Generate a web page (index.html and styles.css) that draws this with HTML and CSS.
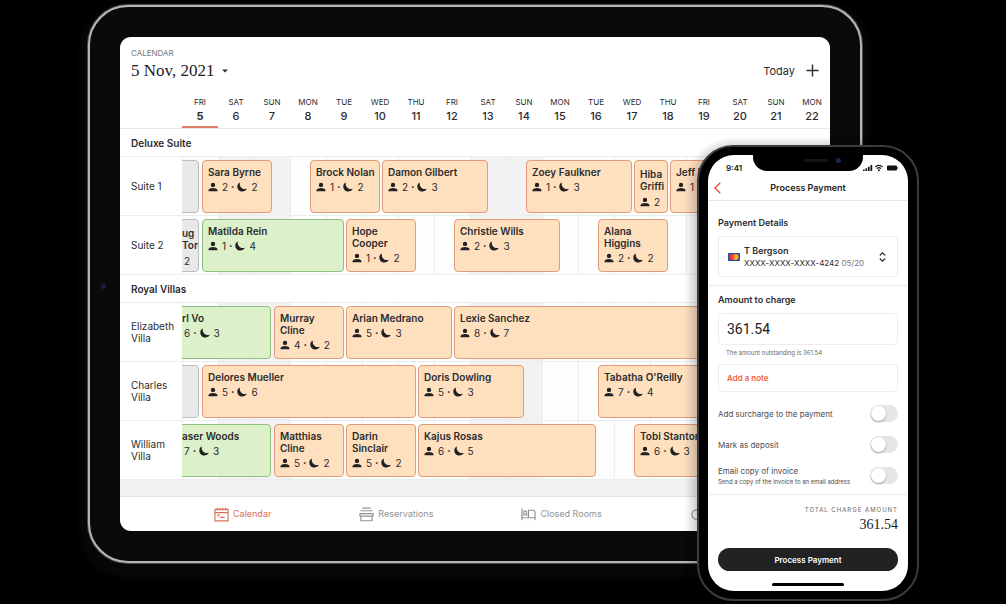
FILE: index.html
```html
<!DOCTYPE html>
<html lang="en">
<head>
<meta charset="utf-8">
<title>Calendar and payment</title>
<link rel="stylesheet" href="styles.css">
</head>
<body>
<svg class="defs" aria-hidden="true">
  <symbol id="person" viewBox="0 0 10 10"><circle cx="5" cy="2.900" r="2.200"/><path d="M.6 9.300V8.300c0-1.600 2.400-2.300 4.400-2.300s4.400.7 4.400 2.300v1z"/></symbol>
  <symbol id="moon" viewBox="0 0 10 10"><path d="M2.900.4C.9 1.300.2 3 .3 4.800c.1 2.700 2.300 4.800 4.900 4.800 2.100 0 3.800-1 4.600-2.800C6 8.100 1.900 5 2.900.4z"/></symbol>
</svg>
<div class="stage">
  <main class="tablet">
    <span class="camera"></span>
    <div class="screen">
      <header class="top">
        <div class="heading">
          <p class="eyebrow">CALENDAR</p>
          <div class="title-row">
            <h1 class="title">5 Nov, 2021</h1>
            <button class="icon-button" aria-label="Choose date"><svg class="caret" viewBox="0 0 6 4"><path d="M0 .5h6L3 3.500z"/></svg></button>
            <button class="today">Today</button>
            <button class="icon-button" aria-label="Add booking"><svg class="plus" viewBox="0 0 13 13"><path d="M6.500.5v12M.5 6.500h12"/></svg></button>
          </div>
        </div>
        <ol class="days">
          <li class="day current">FRI<b>5</b></li><li class="day">SAT<b>6</b></li><li class="day">SUN<b>7</b></li><li class="day">MON<b>8</b></li><li class="day">TUE<b>9</b></li><li class="day">WED<b>10</b></li><li class="day">THU<b>11</b></li><li class="day">FRI<b>12</b></li><li class="day">SAT<b>13</b></li><li class="day">SUN<b>14</b></li><li class="day">MON<b>15</b></li><li class="day">TUE<b>16</b></li><li class="day">WED<b>17</b></li><li class="day">THU<b>18</b></li><li class="day">FRI<b>19</b></li><li class="day">SAT<b>20</b></li><li class="day">SUN<b>21</b></li><li class="day">MON<b>22</b></li>
        </ol>
      </header>

      <h2 class="group">Deluxe Suite</h2>
      <section class="room">
        <h3 class="room-name">Suite 1</h3>
        <div class="lane">
          <article class="booking past earlier" style="grid-column: 1 / 2"></article>
          <article class="booking" style="grid-column: 2 / 6"><h4>Sara Byrne</h4><p class="meta"><svg><use href="#person"/></svg>2<i>•</i><svg><use href="#moon"/></svg>2</p></article>
          <article class="booking" style="grid-column: 8 / 12"><h4>Brock Nolan</h4><p class="meta"><svg><use href="#person"/></svg>1<i>•</i><svg><use href="#moon"/></svg>2</p></article>
          <article class="booking" style="grid-column: 12 / 18"><h4>Damon Gilbert</h4><p class="meta"><svg><use href="#person"/></svg>2<i>•</i><svg><use href="#moon"/></svg>3</p></article>
          <article class="booking" style="grid-column: 20 / 26"><h4>Zoey Faulkner</h4><p class="meta"><svg><use href="#person"/></svg>1<i>•</i><svg><use href="#moon"/></svg>3</p></article>
          <article class="booking narrow" style="grid-column: 26 / 28"><h4>Hiba Griffi</h4><p class="meta"><svg><use href="#person"/></svg>2</p></article>
          <article class="booking" style="grid-column: 28 / 32"><h4>Jeff Ross</h4><p class="meta"><svg><use href="#person"/></svg>1<i>•</i><svg><use href="#moon"/></svg>2</p></article>
        </div>
      </section>
      <section class="room">
        <h3 class="room-name">Suite 2</h3>
        <div class="lane">
          <article class="booking past earlier narrow" style="grid-column: 1 / 2"><h4>ug Tor</h4><p class="meta">2</p></article>
          <article class="booking arrived" style="grid-column: 2 / 10"><h4>Matilda Rein</h4><p class="meta"><svg><use href="#person"/></svg>1<i>•</i><svg><use href="#moon"/></svg>4</p></article>
          <article class="booking" style="grid-column: 10 / 14"><h4>Hope Cooper</h4><p class="meta"><svg><use href="#person"/></svg>1<i>•</i><svg><use href="#moon"/></svg>2</p></article>
          <article class="booking" style="grid-column: 16 / 22"><h4>Christie Wills</h4><p class="meta"><svg><use href="#person"/></svg>2<i>•</i><svg><use href="#moon"/></svg>3</p></article>
          <article class="booking" style="grid-column: 24 / 28"><h4>Alana Higgins</h4><p class="meta"><svg><use href="#person"/></svg>2<i>•</i><svg><use href="#moon"/></svg>2</p></article>
        </div>
      </section>

      <h2 class="group">Royal Villas</h2>
      <section class="room">
        <h3 class="room-name">Elizabeth Villa</h3>
        <div class="lane">
          <article class="booking arrived earlier" style="grid-column: 1 / 6"><h4>rl Vo</h4><p class="meta">6<i>•</i><svg><use href="#moon"/></svg>3</p></article>
          <article class="booking" style="grid-column: 6 / 10"><h4>Murray Cline</h4><p class="meta"><svg><use href="#person"/></svg>4<i>•</i><svg><use href="#moon"/></svg>2</p></article>
          <article class="booking" style="grid-column: 10 / 16"><h4>Arian Medrano</h4><p class="meta"><svg><use href="#person"/></svg>5<i>•</i><svg><use href="#moon"/></svg>3</p></article>
          <article class="booking" style="grid-column: 16 / 32"><h4>Lexie Sanchez</h4><p class="meta"><svg><use href="#person"/></svg>8<i>•</i><svg><use href="#moon"/></svg>7</p></article>
        </div>
      </section>
      <section class="room">
        <h3 class="room-name">Charles Villa</h3>
        <div class="lane">
          <article class="booking past earlier" style="grid-column: 1 / 2"></article>
          <article class="booking" style="grid-column: 2 / 14"><h4>Delores Mueller</h4><p class="meta"><svg><use href="#person"/></svg>5<i>•</i><svg><use href="#moon"/></svg>6</p></article>
          <article class="booking" style="grid-column: 14 / 20"><h4>Doris Dowling</h4><p class="meta"><svg><use href="#person"/></svg>5<i>•</i><svg><use href="#moon"/></svg>3</p></article>
          <article class="booking" style="grid-column: 24 / 32"><h4>Tabatha O'Reilly</h4><p class="meta"><svg><use href="#person"/></svg>7<i>•</i><svg><use href="#moon"/></svg>4</p></article>
        </div>
      </section>
      <section class="room">
        <h3 class="room-name">William Villa</h3>
        <div class="lane">
          <article class="booking arrived earlier" style="grid-column: 1 / 6"><h4>aser Woods</h4><p class="meta">7<i>•</i><svg><use href="#moon"/></svg>3</p></article>
          <article class="booking" style="grid-column: 6 / 10"><h4>Matthias Cline</h4><p class="meta"><svg><use href="#person"/></svg>5<i>•</i><svg><use href="#moon"/></svg>2</p></article>
          <article class="booking" style="grid-column: 10 / 14"><h4>Darin Sinclair</h4><p class="meta"><svg><use href="#person"/></svg>5<i>•</i><svg><use href="#moon"/></svg>2</p></article>
          <article class="booking" style="grid-column: 14 / 24"><h4>Kajus Rosas</h4><p class="meta"><svg><use href="#person"/></svg>6<i>•</i><svg><use href="#moon"/></svg>5</p></article>
          <article class="booking" style="grid-column: 26 / 32"><h4>Tobi Stanton</h4><p class="meta"><svg><use href="#person"/></svg>6<i>•</i><svg><use href="#moon"/></svg>3</p></article>
        </div>
      </section>
      <div class="filler"></div>

      <nav class="tabs">
        <a class="tab active" href="#calendar"><svg class="tab-icon" viewBox="0 0 16 16"><path d="M1 2.500h14v12.300H1zM1 6h14M3.500.8v3M6.500.8v3M9.500.8v3M12.500.8v3M3.500 8.500h3M6.500 11h5M4.500 10v-1.500"/></svg>Calendar</a>
        <a class="tab" href="#reservations"><svg class="tab-icon" viewBox="0 0 16 16"><path d="M3.500 1.200h9M1.500 4h13M1 10V7h14v3M2 9.500v5.200h12V9.500M1 9.700h14"/></svg>Reservations</a>
        <a class="tab" href="#closed"><svg class="tab-icon" viewBox="0 0 16 16"><path d="M1 1.500V14M1 11.500h14M15 14V5.500a2 2 0 0 0-2-2H8v8M1 8.500h7"/><circle cx="4.500" cy="5.800" r="1.700"/></svg>Closed Rooms</a>
        <a class="tab" href="#settings" aria-label="Settings"><svg class="tab-icon" viewBox="0 0 16 16"><circle cx="7" cy="8" r="5"/></svg></a>
      </nav>
    </div>
  </main>

  <aside class="phone">
    <form class="pay">
      <div class="status">
        <span class="clock">9:41</span>
        <div class="notch"><span class="speaker"></span><span class="lens"></span></div>
        <svg class="signals" viewBox="0 0 36 8"><path d="M0 5.500h1.700V7H0zM2.500 4.300h1.700V7H2.500zM5 2.800h1.700V7H5zM7.500 1h1.700v6H7.500z"/><path class="wave" d="M12.300 3c2.200-2 5-2 7.200 0M13.800 4.700c1.200-1.200 3-1.200 4.200 0"/><circle cx="15.900" cy="6.200" r="1"/><rect x="24" y="1.500" width="10" height="5" rx="1"/><path d="M34.500 3h.7v2h-.7z"/></svg>
      </div>
      <header class="pay-head">
        <button type="button" class="back" aria-label="Back"><svg viewBox="0 0 7 12"><path d="M6.200.8.9 6l5.300 5.200"/></svg></button>
        <h2>Process Payment</h2>
      </header>
      <section class="part">
        <h3>Payment Details</h3>
        <button type="button" class="card">
          <svg class="brand" viewBox="0 0 12 8"><rect width="12" height="8" rx="1" fill="#3046a8"/><circle cx="4.300" cy="4" r="2.900" fill="#ee3b26"/><circle cx="7.700" cy="4" r="2.900" fill="#f8b21c"/><path d="M6 1.600a2.900 2.900 0 0 1 0 4.800 2.900 2.900 0 0 1 0-4.800" fill="#f47a21"/></svg>
          <span class="card-text"><strong>T Bergson</strong><span>XXXX-XXXX-XXXX-4242 <em>05/20</em></span></span>
          <svg class="chooser" viewBox="0 0 7 10"><path d="M.8 3.500 3.500.9l2.700 2.600M.8 6.500l2.700 2.600 2.700-2.600"/></svg>
        </button>
      </section>
      <section class="part charge">
        <h3><label for="amount">Amount to charge</label></h3>
        <input class="amount" id="amount" value="361.54">
        <p class="hint">The amount outstanding is 361.54</p>
        <button type="button" class="note">Add a note</button>
        <div class="options">
          <label class="option"><span>Add surcharge to the payment</span><input class="switch" type="checkbox"></label>
          <label class="option"><span>Mark as deposit</span><input class="switch" type="checkbox"></label>
          <label class="option"><span>Email copy of invoice<small>Send a copy of the invoice to an email address</small></span><input class="switch" type="checkbox"></label>
        </div>
      </section>
      <footer class="total">
        <p class="total-label">TOTAL CHARGE AMOUNT</p>
        <p class="total-value">361.54</p>
        <button type="button" class="submit">Process Payment</button>
        <span class="home"></span>
      </footer>
    </form>
  </aside>
</div>
</body>
</html>
```
FILE: styles.css
```css
* { box-sizing: border-box; margin: 0; padding: 0; }
body { background: #000; color: #2c2c2e; font-family: Inter, "Liberation Sans", sans-serif; font-size: 10px; line-height: 12px; }
button, input { font: inherit; color: inherit; background: none; border: 0; }
a { color: inherit; text-decoration: none; }
ol { list-style: none; }
svg { display: block; fill: currentColor; }
.defs { position: absolute; width: 0; height: 0; }

.stage { position: relative; min-height: 100vh; padding: 5px 144px 40px 88px; overflow: hidden; }

/* Tablet */
.tablet { position: relative; padding: 30px; border: 2px solid #b4b7bb; border-radius: 40px; background: #0a0a0a; box-shadow: 0 0 0 1px #4a4b4e, 0 6px 4px 9px #070707; }
.camera { position: absolute; left: 11px; top: 50%; width: 5px; height: 5px; border-radius: 50%; background: #16213f; }
.screen { overflow: hidden; border-radius: 11px; background: #fff; }

.top { border-bottom: 1px solid #e9e9e9; }
.heading { padding: 10px 11px 0; }
.eyebrow { color: #77777a; font-size: 8px; }
.title-row { display: flex; align-items: center; height: 23px; }
.title { font: 500 17px/23px "Liberation Serif", serif; color: #1c1c1e; }
.icon-button { display: flex; }
.caret { width: 6px; height: 4px; margin-left: 8px; }
.today { margin-left: auto; margin-right: 11px; font-size: 11px; }
.plus { width: 13px; height: 13px; fill: none; stroke: #2c2c2e; stroke-width: 1.400; }

.days { display: grid; grid-template-columns: repeat(18, minmax(0, 1fr)); margin-left: 62px; padding-top: 13px; }
.day { display: flex; flex-direction: column; align-items: center; height: 33px; font-size: 8px; line-height: 14px; }
.day b { font-size: 11px; font-weight: 500; }
.current { border-bottom: 2px solid #e07a6a; }
.current b { font-weight: 700; }

.group { padding: 8px 11px 7px; border-bottom: 1px solid #ededed; font-size: 10px; font-weight: 600; }
.room { display: grid; grid-template-columns: 62px minmax(0, 1fr); border-bottom: 1px solid #ededed; }
.room-name { align-self: center; padding-left: 11px; font-size: 10px; font-weight: 400; }
.lane {
  display: grid; grid-template-columns: repeat(36, minmax(0, 1fr)); grid-auto-rows: 53px; overflow: hidden; padding: 3px 0 2px;
  background-color: #fdfefe;
  background-image: linear-gradient(to right, #ececec 1px, transparent 1px), linear-gradient(to right, transparent 14.2857%, #f2f2f2 14.2857% 42.857%, transparent 42.857%);
  background-size: calc(100% / 18) 100%, calc(100% / 18 * 7) 100%;
}
.booking { grid-row: 1; overflow: hidden; margin-left: 2px; padding: 5px 3px 0 5px; border: 1px solid #e39a7d; border-radius: 4px; background: #fee0bf; }
.booking h4 { font-size: 10px; font-weight: 600; }
.arrived { border-color: #8fc080; background: #dcf0c9; }
.past { border-color: #bdbdbd; background: #e9e9e9; }
.earlier { margin-left: -4px; margin-right: 1px; padding-left: 3px; }
.earlier .meta { padding-left: 2px; }
.narrow { padding-top: 7px; padding-right: 0; }
.narrow .meta { margin-top: 4px; }
.meta { display: flex; align-items: center; margin-top: 3px; }
.meta svg { width: 10px; height: 10px; margin-right: 4px; color: #222224; }
.meta i { margin: 0 3px; font-size: 6px; font-style: normal; }
.filler { height: 17px; background: #f2f2f2; border-bottom: 1px solid #e2e2e2; }

.tabs { display: flex; height: 34px; padding-left: 94px; gap: 88px; color: #929294; font-size: 9px; }
.tab { display: flex; align-items: center; gap: 4px; }
.tab-icon { width: 15px; height: 15px; fill: none; stroke: currentColor; stroke-width: 1.200; }
.active { color: #d9705a; }

/* Phone, laid over the tablet's corner */
.phone { position: absolute; top: 145px; right: 87px; width: 222px; padding: 8px 9px; border: 2px solid #3b3b43; border-radius: 36px; background: #000; box-shadow: 0 4px 12px rgba(0, 0, 0, .35), 0 4px 4px 10px rgba(10, 10, 10, .05); }
.pay { overflow: hidden; border-radius: 26px; background: #fff; }
.status { display: flex; align-items: flex-end; height: 19px; padding: 0 9px 0 18px; font-size: 8px; font-weight: 600; color: #111; }
.clock { flex: 1; }
.notch { display: flex; align-items: center; justify-content: center; gap: 8px; align-self: flex-start; width: 110px; height: 16px; padding: 0 0 6px 28px; border-radius: 0 0 14px 14px; background: #000; }
.speaker { width: 24px; height: 3px; border-radius: 2px; background: #151517; }
.lens { width: 5px; height: 5px; border-radius: 50%; background: #16264a; }
.signals { width: 36px; height: 8px; margin-bottom: 2px; }
.signals .wave { fill: none; stroke: currentColor; stroke-width: 1.200; }

.pay-head { display: flex; align-items: center; height: 27px; padding: 1px 6px 0; border-bottom: 1px solid #e8e8e8; }
.pay-head h2 { flex: 1; padding-right: 7px; text-align: center; font-size: 9px; font-weight: 600; color: #1c1c1e; }
.back { width: 7px; }
.back svg { width: 7px; height: 12px; fill: none; stroke: #f0512d; stroke-width: 1.400; }

.part { padding: 16px 10px 8px; border-bottom: 1px solid #ebebed; }
.part h3 { font-size: 9px; font-weight: 600; line-height: 12px; }
.card { display: flex; align-items: center; gap: 4px; width: 100%; height: 41px; margin-top: 7px; padding: 0 11px 0 9px; border: 1px solid #ededed; border-radius: 4px; text-align: left; }
.brand { width: 12px; height: 8px; }
.card-text { display: flex; flex-direction: column; flex: 1; font-size: 8px; white-space: nowrap; }
.card-text strong { font-size: 9px; font-weight: 600; }
.card-text em { font-style: normal; color: #77777a; }
.chooser { width: 7px; height: 10px; fill: none; stroke: #333; stroke-width: 1.200; }
.charge { padding-top: 8px; padding-bottom: 8px; }
.amount { display: block; width: 100%; height: 32px; margin-top: 7px; padding: 0 8px; border: 1px solid #ededed; border-radius: 4px; font: 14px Roboto, sans-serif; color: #1c1c1e; }
.hint { padding: 2px 8px 0; font-size: 6px; color: #6a6a6d; }
.note { display: block; width: 100%; height: 28px; margin-top: 5px; padding: 0 8px; border: 1px solid #ededed; border-radius: 4px; text-align: left; font-size: 8px; font-weight: 600; color: #f2603c; }
.options { display: grid; gap: 10px; padding-top: 11px; }
.option { display: flex; align-items: center; justify-content: space-between; min-height: 21px; font-size: 8px; line-height: 12px; color: #4c4c4f; }
.option small { display: block; font-size: 6px; line-height: 9px; }
.switch { appearance: none; width: 28px; height: 17px; border-radius: 9px; background: #e6e6e7; }
.switch::before { content: ""; display: block; width: 15px; height: 15px; margin: 1px; border-radius: 50%; background: #fff; box-shadow: 0 1px 2px rgba(0, 0, 0, .35); }
.switch:checked::before { margin-left: 12px; }

.total { display: flex; flex-direction: column; padding: 9px 10px 5px; text-align: right; }
.total-label { font-size: 6px; letter-spacing: 1px; color: #666; }
.total-value { font: 500 14px/18px "Liberation Serif", serif; color: #1c1c1e; }
.submit { height: 23px; margin-top: 14px; border-radius: 12px; background: #202224; color: #fff; font-size: 8px; font-weight: 600; }
.home { align-self: center; width: 72px; height: 3px; margin-top: 12px; border-radius: 2px; background: #000; }
```
